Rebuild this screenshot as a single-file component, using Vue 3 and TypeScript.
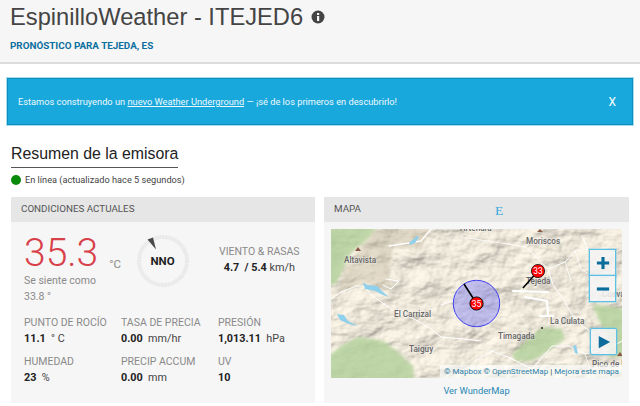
<script setup lang="ts">
const stats = [
  { label: "PUNTO DE ROCÍO", value: "11.1", unit: "° C" },
  { label: "TASA DE PRECIA", value: "0.00", unit: "mm/hr" },
  { label: "PRESIÓN", value: "1,013.11", unit: "hPa" },
  { label: "HUMEDAD", value: "23", unit: "%" },
  { label: "PRECIP ACCUM", value: "0.00", unit: "mm" },
  { label: "UV", value: "10", unit: "" },
];

const placeLabels = [
  { name: "Altavista", x: 13, y: 34 },
  { name: "Moriscos", x: 195, y: 15 },
  { name: "Tejeda", x: 195, y: 55 },
  { name: "El Carrizal", x: 63, y: 88 },
  { name: "La Culata", x: 219, y: 95 },
  { name: "Timagada", x: 167, y: 110 },
  { name: "Taigüy", x: 78, y: 123 },
  { name: "Artenara", x: 129, y: 2 },
  { name: "Cueva", x: 271, y: 68 },
  { name: "Pico de la", x: 261, y: 138 },
];
</script>

<template>
  <div class="page">
    <header class="top">
      <h1>EspinilloWeather - ITEJED6
        <svg class="info" viewBox="0 0 14 14" width="14" height="14">
          <circle cx="7" cy="7" r="6.5" fill="#444" />
          <rect x="6" y="6" width="2.2" height="5" fill="#f6f6f6" />
          <rect x="6" y="3" width="2.2" height="2" fill="#f6f6f6" />
        </svg>
      </h1>
      <a class="forecast">PRONÓSTICO PARA TEJEDA, ES</a>
    </header>

    <div class="banner">
      <p>Estamos construyendo un <a>nuevo Weather Underground</a> — ¡sé de los primeros en descubrirlo!</p>
      <span class="close">X</span>
    </div>

    <section class="summary">
      <h2>Resumen de la emisora</h2>
      <p class="status"><i class="dot"></i>En línea (actualizado hace 5 segundos)</p>

      <div class="panels">
        <article class="panel">
          <h3>CONDICIONES ACTUALES</h3>
          <div class="current">
            <div class="top-row">
              <div class="temp-col">
                <div class="temp"><span class="big">35.3</span><span class="deg">°C</span></div>
                <p class="feels">Se siente como</p>
                <p class="feels">33.8 °</p>
              </div>
              <div class="compass">
                <svg viewBox="0 0 56 56" width="56" height="56">
                  <circle cx="28" cy="28" r="24" fill="none" stroke="#e6e6e6" stroke-width="4" stroke-dasharray="1 0.5" />
                  <path d="M12.5 6.5 18 4.5 21 16.5Z" fill="#4a4a4a" />
                </svg>
                <b>NNO</b>
              </div>
              <div class="wind">
                <span class="label">VIENTO &amp; RASAS</span>
                <span class="val"><b>4.7 &nbsp;/ 5.4</b> km/h</span>
              </div>
            </div>
            <div class="grid">
              <div v-for="s in stats" :key="s.label" class="cell">
                <span class="label">{{ s.label }}</span>
                <span class="val"><b>{{ s.value }}</b>&nbsp; {{ s.unit }}</span>
              </div>
            </div>
          </div>
        </article>

        <article class="panel">
          <h3>MAPA <span class="stray">E</span></h3>
          <div class="map-body">
            <div class="map">
              <svg viewBox="0 0 291 149" width="291" height="149">
                <defs>
                  <filter id="terrain" x="0" y="0" width="100%" height="100%">
                    <feTurbulence type="fractalNoise" baseFrequency="0.03 0.045" numOctaves="4" seed="11" />
                    <feDiffuseLighting surfaceScale="5" diffuseConstant="1.08" lighting-color="#f6f0e2">
                      <feDistantLight azimuth="225" elevation="58" />
                    </feDiffuseLighting>
                    <feGaussianBlur stdDeviation="0.5" />
                  </filter>
                  <filter id="soft" x="-10%" y="-10%" width="120%" height="120%">
                    <feGaussianBlur stdDeviation="1.6" />
                  </filter>
                </defs>
                <rect width="291" height="149" filter="url(#terrain)" />
                <g fill="#c4b99f" opacity="0.4" filter="url(#soft)">
                  <path d="M44 0H100L90 20 62 18 58 44 60 62 34 54 8 62 14 40 30 18Z" />
                </g>
                <g fill="#b2d09a" opacity="0.8" filter="url(#soft)">
                  <path d="M-4 -4H47L37 10 20 24 15 35 10 45 5 55 -4 57Z" />
                  <path d="M-4 128 10 117 27 108 53 112 67 123 82 137 83 153H-4Z" />
                  <path d="M181 125 194 113 211 98 231 100 234 110 216 123 201 132 184 132Z" />
                  <path d="M261 75 295 80V127L277 128 276 104 268 92Z" />
                </g>
                <g fill="none" stroke="#fff" stroke-linecap="round" stroke-linejoin="round" stroke-width="1">
                  <path d="M0 70 10 63 25 57 32 57 43 68 63 82 83 90 100 100 110 108 133 110 150 112" />
                  <path d="M58 17 90 12 100 0" stroke-width="1.4" />
                  <path d="M55 50 68 52 60 60 52 56" />
                  <path d="M144 132 161 122 177 128 201 140 221 117 238 117 254 125 277 120 291 112" />
                  <path d="M217 40 234 33 244 22 257 20 251 7" />
                  <path d="M217 40 222 56 232 70 240 84 250 96 262 104" />
                  <path d="M130 8 170 14 195 18 217 40" stroke-width="0.8" />
                  <path d="M110 76 122 72 128 60" stroke-width="1.3" />
                  <path d="M244 22 250 40 262 48 256 62 M234 33 240 52 M270 30 291 20" stroke-width="0.8" />
                  <path d="M201 140 196 149 M254 125 262 149" stroke-width="0.8" />
                </g>
                <g fill="none" stroke="#fff" stroke-width="2.2" stroke-linecap="round">
                  <path d="M182 62 217 63 M194 68 216 72 217 85 M209 87 222 87" />
                </g>
                <g fill="#8fd0ec">
                  <path d="M78 14 86 7 88 8 84 14 79 16Z" />
                  <path d="M32 53 36 56 46 57 52 63 58 68 52 66 44 62 34 60Z" />
                  <path d="M6 85 13 86 17 92 27 97 18 95 9 91Z" />
                  <path d="M242 117 245 116 247 125 244 124Z" />
                </g>
                <g fill="#8a5a48">
                  <path d="M27 18 30 22H24Z" />
                  <path d="M209 0 212 3H206Z" />
                  <path d="M289 123 292 127H286Z" />
                </g>
                <circle cx="211" cy="99" r="1" fill="#222" />
                <text v-for="p in placeLabels" :key="p.name" :x="p.x" :y="p.y" class="place">{{ p.name }}</text>
                <circle cx="145.5" cy="74.5" r="23.2" fill="#6a6aff" fill-opacity="0.36" stroke="#3f3fee" stroke-width="1" />
                <path d="M133 55 145.5 74.5 M192 59 207 42" stroke="#000" stroke-width="1.6" fill="none" />
                <circle cx="145.5" cy="74.5" r="6.6" fill="#f00" stroke="#111" stroke-width="1" />
                <circle cx="207" cy="42" r="6.6" fill="#f00" stroke="#111" stroke-width="0.8" />
                <text x="145.5" y="77.500" class="pin">35</text>
                <text x="207" y="45" class="pin">33</text>
              </svg>

              <div class="zoom">
                <button class="ctl">
                  <svg viewBox="0 0 16 16" width="14" height="14"><path d="M6.2 1h3.600v5.200H15v3.600H9.800v5.200H6.200V9.800H1V6.200h5.200Z" /></svg>
                </button>
                <button class="ctl">
                  <svg viewBox="0 0 16 16" width="14" height="14"><path d="M1 6.200h14v3.600H1Z" /></svg>
                </button>
              </div>
              <button class="ctl play">
                <svg viewBox="0 0 16 16" width="14" height="14"><path d="M2 1 15 8 2 15Z" /></svg>
              </button>
              <div class="attrib"><a>© Mapbox</a> <a>© OpenStreetMap</a> | <a>Mejora este mapa</a></div>
            </div>
            <a class="more">Ver WunderMap</a>
          </div>
        </article>
      </div>
    </section>
  </div>
</template>

<style scoped>
.page {
  width: 640px;
  height: 406px;
  overflow: hidden;
  background: #fff;
  font-family: Roboto, "Liberation Sans", sans-serif;
  color: #333;
}

.top {
  height: 64px;
  box-sizing: border-box;
  padding: 0 10px;
  background: #f6f6f6;
  border-bottom: 2px solid #dcdcdc;
}

h1 {
  margin: 0;
  padding-top: 1px;
  display: flex;
  align-items: center;
  gap: 8px;
  font: 400 23.7px/32px "Liberation Sans", sans-serif;
  color: #444;
}

.forecast {
  display: block;
  margin-top: 6px;
  font-size: 9.85px;
  line-height: 14px;
  font-weight: 700;
  color: #0b6f9f;
}

.banner {
  margin: 14px 7px 0;
  height: 47px;
  box-sizing: border-box;
  display: flex;
  align-items: center;
  justify-content: space-between;
  padding: 0 16px 0 10px;
  background: #19a8dc;
  border: 1px solid #0f8dbd;
  box-shadow: 0 0 0 1px #a6dcf0;
  color: #eef9fd;
  font-size: 9.25px;
}

.banner p {
  margin: 0;
}

.banner a {
  text-decoration: underline;
}

.close {
  font-size: 12px;
  color: #fff;
}

.summary {
  padding: 19px 11px 0;
}

h2 {
  display: inline-block;
  margin: 0;
  padding-bottom: 3px;
  border-bottom: 1px solid #555;
  font: 400 15.85px/20px "Liberation Sans", sans-serif;
  color: #222;
}

.status {
  margin: 5px 0 0;
  display: flex;
  align-items: center;
  gap: 4px;
  font-size: 9.2px;
  line-height: 14px;
  color: #444;
}

.dot {
  width: 10px;
  height: 10px;
  border-radius: 50%;
  background: #0a8a0a;
}

.panels {
  margin-top: 10px;
  display: grid;
  grid-template-columns: 304px 305px;
  gap: 9px;
}

.panel {
  height: 206px;
  background: #f6f6f6;
}

h3 {
  position: relative;
  margin: 0;
  height: 25px;
  padding: 0 10px;
  background: #e6e6e6;
  font-size: 9.8px;
  font-weight: 400;
  line-height: 24px;
  color: #555;
}

.stray {
  position: absolute;
  left: 171px;
  top: 2px;
  font: 13.5px/24px "Liberation Serif", serif;
  color: #38a9de;
}

.current {
  padding: 14px 13px 0;
}

.top-row {
  display: flex;
}

.temp-col {
  width: 110.5px;
}

.temp {
  display: flex;
  align-items: flex-end;
  height: 34px;
}

.big {
  font-size: 39px;
  font-weight: 300;
  line-height: 34px;
  color: #d8404a;
}

.deg {
  margin-left: 11px;
  font-size: 11.5px;
  line-height: 12px;
  color: #888;
}

.feels {
  margin: 0;
  font-size: 10.5px;
  line-height: 16px;
  color: #8a8a8a;
}

.temp + .feels {
  margin-top: 3px;
}

.compass {
  position: relative;
  width: 56px;
  height: 56px;
  margin-top: -3px;
}

.compass svg {
  display: block;
}

.compass b {
  position: absolute;
  inset: 0;
  display: flex;
  align-items: center;
  justify-content: center;
  font-size: 11.5px;
  color: #222;
}

.wind {
  margin: 8px 0 0 28.5px;
}

.label {
  display: block;
  font-size: 10.5px;
  line-height: 16px;
  color: #8a8a8a;
  white-space: nowrap;
}

.val {
  display: block;
  font-size: 10.8px;
  line-height: 16px;
  color: #444;
  white-space: nowrap;
}

.val b {
  color: #222;
}

.wind .val {
  text-align: center;
}

.grid {
  margin-top: 10px;
  display: grid;
  grid-template-columns: 97px 97px 1fr;
  row-gap: 7px;
}

.map-body {
  padding: 7px 7px 0;
}

.map {
  position: relative;
  width: 291px;
  height: 149px;
  overflow: hidden;
}

.map > svg {
  display: block;
}

.place {
  font: 500 8.2px Roboto, sans-serif;
  fill: #666;
  stroke: rgba(255, 255, 255, 0.4);
  stroke-width: 1.2px;
  paint-order: stroke;
}

.pin {
  font: 8.5px Roboto, sans-serif;
  fill: #fff;
  text-anchor: middle;
}

.ctl {
  display: flex;
  align-items: center;
  justify-content: center;
  padding: 0;
  width: 27px;
  height: 27px;
  background: rgba(244, 244, 244, 0.85);
  border: 1px solid #5cc0e4;
  box-shadow: 0 0 0 1px rgba(92, 192, 228, 0.3);
}

.ctl svg {
  fill: #0b6c9c;
}

.zoom {
  position: absolute;
  left: 258px;
  top: 20px;
}

.zoom .ctl + .ctl {
  margin-top: -1px;
}

.play {
  position: absolute;
  left: 259px;
  top: 99px;
  border-radius: 2px;
}

.attrib {
  position: absolute;
  right: 0;
  bottom: 0;
  padding: 0 3px 0 4px;
  height: 13px;
  line-height: 13px;
  font-size: 8.1px;
  white-space: nowrap;
  background: rgba(255, 255, 255, 0.62);
  color: #333;
}

.attrib a {
  color: #2a7fa8;
}

.more {
  display: block;
  margin-top: 6px;
  text-align: center;
  font-size: 9.3px;
  line-height: 14px;
  color: #1f86b4;
}
</style>
